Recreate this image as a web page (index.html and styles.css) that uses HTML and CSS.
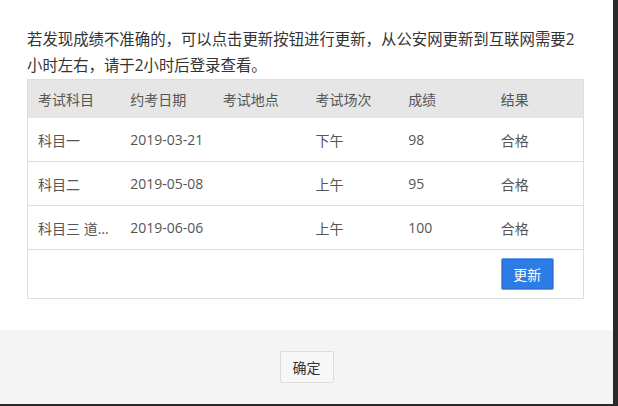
FILE: index.html
```html
<!DOCTYPE html>
<html lang="zh-CN">
<head>
<meta charset="utf-8">
<title>成绩查询</title>
<link rel="stylesheet" href="styles.css">
</head>
<body>
<div class="modal">
  <div class="modal-body">
    <p class="notice">若发现成绩不准确的，可以点击更新按钮进行更新，从公安网更新到互联网需要2小时左右，请于2小时后登录查看。</p>
    <table class="score-table">
      <thead>
        <tr><th>考试科目</th><th>约考日期</th><th>考试地点</th><th>考试场次</th><th>成绩</th><th>结果</th></tr>
      </thead>
      <tbody>
        <tr><td>科目一</td><td>2019-03-21</td><td></td><td>下午</td><td>98</td><td>合格</td></tr>
        <tr><td>科目二</td><td>2019-05-08</td><td></td><td>上午</td><td>95</td><td>合格</td></tr>
        <tr><td class="ellipsis">科目三 道路驾驶技能</td><td>2019-06-06</td><td></td><td>上午</td><td>100</td><td>合格</td></tr>
        <tr class="action-row"><td></td><td></td><td></td><td></td><td></td><td><button class="btn-primary">更新</button></td></tr>
      </tbody>
    </table>
  </div>
  <div class="modal-footer">
    <button class="btn-default">确定</button>
  </div>
</div>
</body>
</html>
```
FILE: styles.css
```css
html, body {
  margin: 0;
  padding: 0;
  height: 100%;
}
body {
  background: #2a2a2a;
  font-family: "Open Sans", "Noto Sans CJK SC", sans-serif;
  color: #333;
}
.modal {
  width: 613px;
  height: 404px;
  background: #fff;
  display: flex;
  flex-direction: column;
}
.modal-body {
  flex: 1;
  padding: 27px 29px 0 27px;
}
.notice {
  margin: 0;
  font-size: 15.4px;
  line-height: 26px;
  color: #333;
}
.score-table {
  width: 557px;
  table-layout: fixed;
  border-collapse: collapse;
  border: 1px solid #dedede;
  font-size: 14px;
  color: #555;
}
.score-table th {
  background: #e6e6e6;
  font-weight: normal;
  text-align: left;
  height: 38px;
  padding: 0 10px;
  color: #555;
}
.score-table td {
  height: 43px;
  padding: 0 4px 0 10px;
  border-bottom: 1px solid #dedede;
  white-space: nowrap;
  overflow: visible;
}
.score-table td.ellipsis {
  padding-right: 10px;
  overflow: hidden;
  text-overflow: ellipsis;
}
.score-table .action-row td {
  height: 48px;
}
.btn-primary {
  width: 53px;
  height: 32px;
  padding: 0;
  background: #2d7be4;
  border: 1px solid #6aa5f2;
  border-radius: 2px;
  color: #fff;
  font-family: inherit;
  font-size: 14px;
  box-shadow: inset 0 0 0 1px #2a6fd0;
}
.modal-footer {
  height: 74px;
  background: #f4f4f4;
  display: flex;
  align-items: center;
  justify-content: center;
}
.btn-default {
  width: 54px;
  height: 32px;
  padding: 0;
  background: #f7f7f7;
  border: 1px solid #dcdcdc;
  border-radius: 2px;
  color: #333;
  font-family: inherit;
  font-size: 14px;
}
```
